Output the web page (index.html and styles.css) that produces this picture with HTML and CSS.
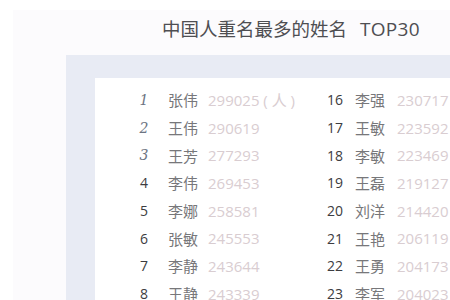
FILE: index.html
```html
<!DOCTYPE html>
<html lang="zh">
<head>
<meta charset="utf-8">
<link rel="stylesheet" href="styles.css">
</head>
<body>
<div class="panel">
  <h1 class="title">中国人重名最多的姓名<span class="top">TOP30</span></h1>
  <div class="frame">
    <div class="sheet">
      <div class="row"><span class="rank special">1</span><span class="name">张伟</span><span class="count">299025 ( 人 )</span><span class="rank">16</span><span class="name">李强</span><span class="count">230717</span></div>
      <div class="row"><span class="rank special">2</span><span class="name">王伟</span><span class="count">290619</span><span class="rank">17</span><span class="name">王敏</span><span class="count">223592</span></div>
      <div class="row"><span class="rank special">3</span><span class="name">王芳</span><span class="count">277293</span><span class="rank">18</span><span class="name">李敏</span><span class="count">223469</span></div>
      <div class="row"><span class="rank">4</span><span class="name">李伟</span><span class="count">269453</span><span class="rank">19</span><span class="name">王磊</span><span class="count">219127</span></div>
      <div class="row"><span class="rank">5</span><span class="name">李娜</span><span class="count">258581</span><span class="rank">20</span><span class="name">刘洋</span><span class="count">214420</span></div>
      <div class="row"><span class="rank">6</span><span class="name">张敏</span><span class="count">245553</span><span class="rank">21</span><span class="name">王艳</span><span class="count">206119</span></div>
      <div class="row"><span class="rank">7</span><span class="name">李静</span><span class="count">243644</span><span class="rank">22</span><span class="name">王勇</span><span class="count">204173</span></div>
      <div class="row"><span class="rank">8</span><span class="name">王静</span><span class="count">243339</span><span class="rank">23</span><span class="name">李军</span><span class="count">204023</span></div>
    </div>
  </div>
</div>
</body>
</html>
```

FILE: styles.css
```css
html, body {
  margin: 0;
  padding: 0;
  background: #ffffff;
  overflow: hidden;
  width: 450px;
  height: 300px;
}
body {
  font-family: "Noto Sans CJK SC", "Noto Sans", sans-serif;
}
.panel {
  margin: 10px 0 0 13px;
  background: #fcfbfd;
  height: 290px;
  overflow: hidden;
}
.title {
  margin: 0;
  padding: 5px 0 0 149px;
  height: 40px;
  font-size: 18.5px;
  font-weight: 400;
  line-height: 27px;
  color: #4e4e52;
}
.top {
  margin-left: 13px;
  font-family: "Open Sans", "Noto Sans", sans-serif;
  font-size: 19px;
  letter-spacing: 0.3px;
}
.frame {
  margin-left: 53px;
  background: #e8ebf4;
  padding: 23px 0 0 29px;
  height: 222px;
}
.sheet {
  background: #ffffff;
  height: 214px;
  padding: 8px 0 0 34px;
}
.row {
  display: grid;
  grid-template-columns: 30px 49px 112px 30px 47px auto;
  height: 27.7px;
  align-items: center;
  white-space: nowrap;
}
.rank {
  text-align: center;
  font-family: "Open Sans", "Noto Sans", sans-serif;
  font-size: 14px;
  color: #3c3c40;
}
.rank.special {
  font-family: "DejaVu Serif", serif;
  font-style: italic;
  color: #6c7482;
  font-size: 14px;
}
.name {
  font-size: 15px;
  color: #77777a;
  padding-left: 9px;
}
.row .name:nth-child(5) {
  padding-left: 5px;
}
.count {
  font-size: 15px;
  color: #d9cdd1;
  font-family: "Open Sans", "Noto Sans CJK SC", sans-serif;
}
```
